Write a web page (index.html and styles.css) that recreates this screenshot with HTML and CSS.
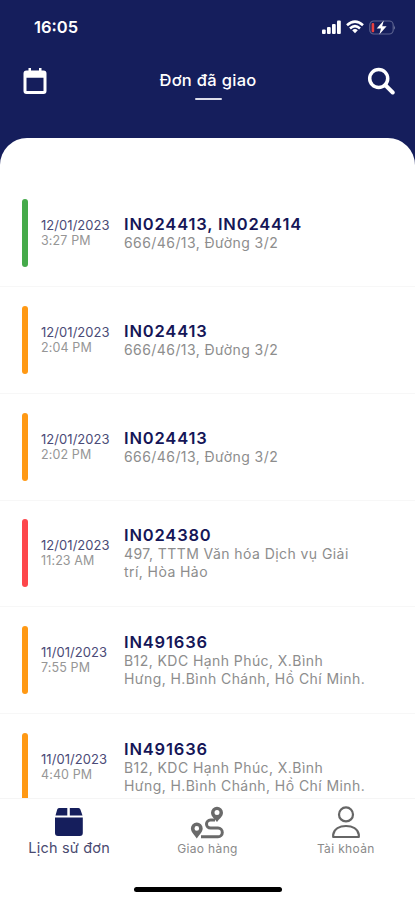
FILE: index.html
```html
<!DOCTYPE html>
<html lang="vi">
<head>
<meta charset="utf-8">
<meta name="viewport" content="width=device-width, initial-scale=1">
<title>Đơn đã giao</title>
<link rel="stylesheet" href="styles.css">
</head>
<body>
<div class="app">
  <header class="header">
    <div class="status">
      <span class="clock">16:05</span>
      <div class="status-icons">
        <svg class="signal" width="19" height="14" viewBox="0 0 19 14" fill="#fff"><rect x="0" y="9.500" width="3.700" height="4.500" rx="1"/><rect x="5" y="7" width="3.700" height="7" rx="1"/><rect x="10" y="4" width="3.700" height="10" rx="1"/><rect x="15" y="0.500" width="3.800" height="13.500" rx="1"/></svg>
        <svg class="wifi" width="18" height="14" viewBox="0 0 18 14" fill="none" stroke="#fff" stroke-width="2.600"><path d="M1 5.200Q9-2 17 5.200M4 8.400Q9 4 14 8.400"/><path d="M6.200 10.200Q9 8 11.800 10.200L9 13.200Z" fill="#fff" stroke="none"/></svg>
        <svg class="battery" width="27" height="15" viewBox="0 0 27 15"><rect x=".8" y="1" width="23.400" height="13" rx="4" fill="none" stroke="#5c6390" stroke-width="1.200"/><rect x="2.600" y="3" width="2.600" height="9.200" rx="1" fill="#e8403f"/><path d="M25.200 5.200Q26.800 7.500 25.200 9.800Z" fill="#7b81a6"/><path d="M14.800.5L7.700 8.500H12L10.300 14.500L17.600 6.300H13.200Z" fill="#fff"/></svg>
      </div>
    </div>
    <div class="titlebar">
      <svg class="calendar" width="24" height="28" viewBox="0 0 24 28"><path fill="#fff" fill-rule="evenodd" d="M5.500 1H8V3.500H16V1H18.500V3.500H20.500Q23.500 3.500 23.500 6.500V24Q23.500 27 20.500 27H3.500Q.5 27 .5 24V6.500Q.5 3.500 3.500 3.500H5.500ZM3.500 10.700V24H20.500V10.700Z"/></svg>
      <h1 class="title">Đơn đã giao</h1>
      <svg class="search" width="28" height="28" viewBox="0 0 28 28" fill="none" stroke="#fff" stroke-width="3.500"><circle cx="11.700" cy="11.500" r="9"/><path d="M18.200 18L25.700 25.500" stroke-width="4" stroke-linecap="round"/></svg>
    </div>
  </header>
  <main class="orders">
    <article class="order"><i class="bar green"></i><div class="when"><p class="date">12/01/2023</p><p class="time">3:27 PM</p></div><div class="info"><h2>IN024413, IN024414</h2><p>666/46/13, Đường 3/2</p></div></article>
    <article class="order"><i class="bar"></i><div class="when"><p class="date">12/01/2023</p><p class="time">2:04 PM</p></div><div class="info"><h2>IN024413</h2><p>666/46/13, Đường 3/2</p></div></article>
    <article class="order"><i class="bar"></i><div class="when"><p class="date">12/01/2023</p><p class="time">2:02 PM</p></div><div class="info"><h2>IN024413</h2><p>666/46/13, Đường 3/2</p></div></article>
    <article class="order"><i class="bar red"></i><div class="when"><p class="date">12/01/2023</p><p class="time">11:23 AM</p></div><div class="info"><h2>IN024380</h2><p>497, TTTM Văn hóa Dịch vụ Giải<br>trí, Hòa Hảo</p></div></article>
    <article class="order"><i class="bar"></i><div class="when"><p class="date">11/01/2023</p><p class="time">7:55 PM</p></div><div class="info"><h2>IN491636</h2><p>B12, KDC Hạnh Phúc, X.Bình<br>Hưng, H.Bình Chánh, Hồ Chí Minh.</p></div></article>
    <article class="order"><i class="bar"></i><div class="when"><p class="date">11/01/2023</p><p class="time">4:40 PM</p></div><div class="info"><h2>IN491636</h2><p>B12, KDC Hạnh Phúc, X.Bình<br>Hưng, H.Bình Chánh, Hồ Chí Minh.</p></div></article>
  </main>
  <footer class="footer">
    <nav class="tabs">
      <a class="tab active"><svg width="30" height="33" viewBox="0 0 30 33" fill="#151e5c"><path d="M5 2H13.300V9.500H1.500L3.200 3.500Q3.600 2 5 2ZM15.800 2H24.500Q26 2 26.400 3.500L28.500 9.500H15.800ZM1 11.500H28.800V27Q28.800 30 25.800 30H4Q1 30 1 27Z"/></svg><span>Lịch sử đơn</span></a>
      <a class="tab"><svg width="34" height="34" viewBox="0 0 34 34"><path fill="#6a6a6a" fill-rule="evenodd" d="M6.800 16.500A5.900 5.900 0 0 1 12.700 22.400C12.700 26 8.500 29.500 6.800 32.500C5.100 29.500 .9 26 .9 22.400A5.900 5.900 0 0 1 6.800 16.500ZM6.800 20.100A2.300 2.300 0 1 0 6.800 24.700A2.300 2.300 0 1 0 6.800 20.100ZM27 .7A6 6 0 0 1 33 6.700C33 10.500 29 13 27 16C25 13 21 10.500 21 6.700A6 6 0 0 1 27 .7ZM27 4.100A2.500 2.500 0 1 0 27 9.100A2.500 2.500 0 1 0 27 4.100Z"/><path fill="none" stroke="#6a6a6a" stroke-width="3" d="M25 14.100H20.500A4 4 0 0 0 20.500 22.100H28A4.300 4.300 0 0 1 28 30.700H11"/></svg><span>Giao hàng</span></a>
      <a class="tab"><svg width="30" height="34" viewBox="0 0 30 34" fill="none" stroke="#666" stroke-width="2.200"><circle cx="15" cy="8.400" r="7"/><path d="M2.200 31V28.500C3.200 23 8.500 20 15 20S26.800 23 27.800 28.500V31Z" stroke-linejoin="round"/></svg><span>Tài khoản</span></a>
    </nav>
    <div class="home"></div>
  </footer>
</div>
</body>
</html>
```
FILE: styles.css
```css
* { box-sizing: border-box; }
body { margin: 0; font-family: Inter, "Liberation Sans", sans-serif; }
h1, h2, p { margin: 0; }
svg { display: block; flex: none; }
.app { height: 900px; display: flex; flex-direction: column; overflow: hidden; background: #151e5c; }
.header { height: 138px; flex: none; color: #fff; }
.status { height: 54px; padding: 0 19px 0 34px; display: flex; align-items: center; justify-content: space-between; }
.clock { font-size: 16.5px; font-weight: 600; }
.status-icons { display: flex; align-items: center; gap: 5px; }
.titlebar { height: 54px; padding: 0 20px 0 23px; display: flex; align-items: center; justify-content: space-between; }
.title { display: flex; flex-direction: column; align-items: center; font-size: 16.5px; font-weight: 500; line-height: 20px; letter-spacing: .3px; padding: 8px 0 0 2px; }
.title::after { content: ""; width: 27px; height: 2px; border-radius: 1px; margin-top: 8px; background: #dddeea; }
.orders { flex: 1; min-height: 0; overflow: hidden; padding-top: 42.6px; background: #fff; border-radius: 27px 27px 0 0; }
.order { height: 106.65px; padding-left: 21.5px; display: flex; align-items: center; border-bottom: 1px solid #f7f7f7; }
.bar { width: 6.5px; height: 68px; border-radius: 4px; background: #ff9914; }
.green { background: #45aa4a; }
.red { background: #fd464b; }
.when { width: 83px; margin-left: 13px; font-size: 13px; line-height: 15px; letter-spacing: .05px; }
.date { color: #4b4b77; }
.time { color: #969696; font-size: 12.5px; letter-spacing: .12px; }
.info { padding-top: 1px; }
.info h2 { font-size: 16.5px; line-height: 19px; font-weight: 600; color: #151657; letter-spacing: .83px; }
.info p { font-size: 14px; line-height: 18px; color: #8d8d8d; letter-spacing: .43px; white-space: nowrap; }
.footer { height: 102px; flex: none; background: #fff; border-top: 1px solid #f5f5f5; }
.tabs { height: 82px; display: grid; grid-template-columns: repeat(3, 1fr); padding-top: 7px; }
.tab { display: flex; flex-direction: column; align-items: center; font-size: 12px; line-height: 18px; letter-spacing: .35px; color: #8a8a8a; }
.tab.active { font-size: 14.5px; line-height: 17px; letter-spacing: .2px; color: #4a4a70; }
.home { width: 148px; height: 5px; margin: 6px auto 0; border-radius: 3px; background: #000; }
```
